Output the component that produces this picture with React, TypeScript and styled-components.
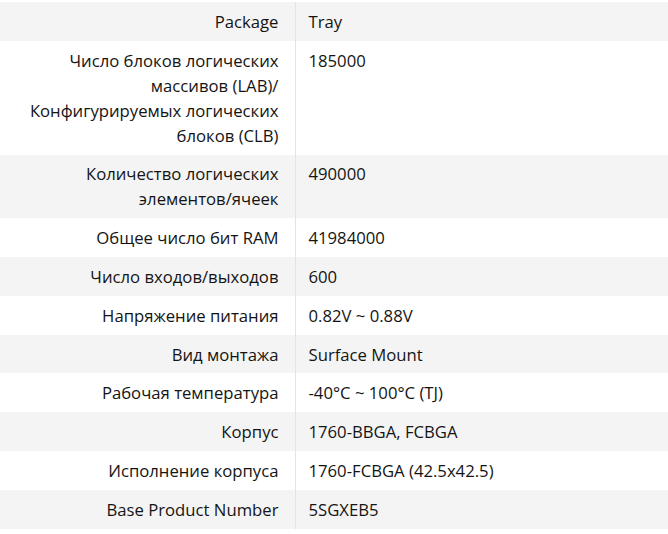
import React from "react";
import styled, { createGlobalStyle } from "styled-components";

const GlobalStyle = createGlobalStyle`
  html, body {
    margin: 0;
    padding: 0;
    background: #ffffff;
  }
  body {
    font-family: "Open Sans", "Noto Sans", Arial, sans-serif;
    color: #141414;
  }
`;

const Wrapper = styled.div`
  padding-top: 2px;
  width: 668px;
`;

const Table = styled.table`
  width: 100%;
  border-collapse: collapse;
  table-layout: fixed;
  font-size: 16.7px;
  line-height: 25px;
`;

const Row = styled.tr<{ $shaded: boolean }>`
  background: ${(p) => (p.$shaded ? "#f4f4f4" : "#ffffff")};
`;

const LabelCell = styled.th`
  width: 295px;
  box-sizing: border-box;
  padding: 6.9px 16px 6.9px 12px;
  text-align: right;
  vertical-align: top;
  font-weight: 400;
  border-right: 1px solid #e4e4e4;
`;

const ValueCell = styled.td`
  padding: 6.9px 14px 6.9px 13px;
  text-align: left;
  vertical-align: top;
`;

const rows: [string, string][] = [
  ["Package", "Tray"],
  [
    "Число блоков логических массивов (LAB)/ Конфигурируемых логических блоков (CLB)",
    "185000",
  ],
  ["Количество логических элементов/ячеек", "490000"],
  ["Общее число бит RAM", "41984000"],
  ["Число входов/выходов", "600"],
  ["Напряжение питания", "0.82V ~ 0.88V"],
  ["Вид монтажа", "Surface Mount"],
  ["Рабочая температура", "-40°C ~ 100°C (TJ)"],
  ["Корпус", "1760-BBGA, FCBGA"],
  ["Исполнение корпуса", "1760-FCBGA (42.5x42.5)"],
  ["Base Product Number", "5SGXEB5"],
];

export default function App() {
  return (
    <>
      <GlobalStyle />
      <Wrapper>
        <Table>
          <tbody>
            {rows.map(([label, value], i) => (
              <Row key={label} $shaded={i % 2 === 0}>
                <LabelCell scope="row">{label}</LabelCell>
                <ValueCell>{value}</ValueCell>
              </Row>
            ))}
          </tbody>
        </Table>
      </Wrapper>
    </>
  );
}
